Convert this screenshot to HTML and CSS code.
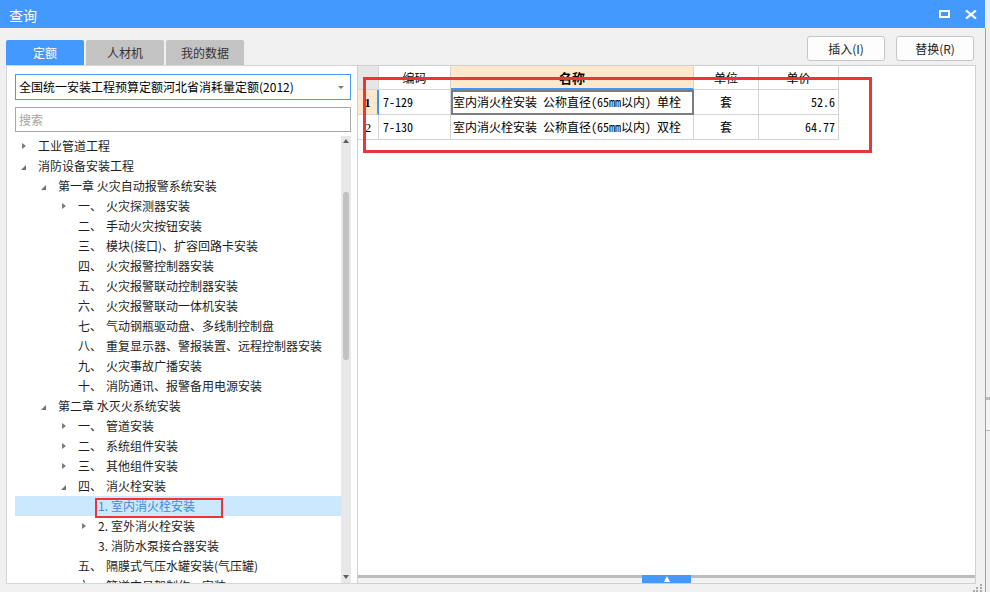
FILE: index.html
```html
<!DOCTYPE html>
<html lang="zh-CN">
<head>
<meta charset="utf-8">
<title>查询</title>
<link rel="stylesheet" href="styles.css">
</head>
<body>
<div class="screen">
  <div class="window">
    <div class="titlebar">
      <span class="title">查询</span>
      <div class="title-btns">
        <svg class="ic" width="11" height="8" viewBox="0 0 11 8"><rect x="1" y="1" width="9" height="6" fill="none" stroke="#fff" stroke-width="2"/></svg>
        <svg class="ic" width="12" height="9" viewBox="0 0 12 9"><path d="M1 0.5 L11 8.5 M11 0.5 L1 8.5" stroke="#fff" stroke-width="2.2" fill="none"/></svg>
      </div>
    </div>
    <div class="body">
      <div class="toolbar">
        <div class="tabs">
          <div class="tab active">定额</div>
          <div class="tab">人材机</div>
          <div class="tab">我的数据</div>
        </div>
        <div class="actions">
          <button class="btn">插入(I)</button>
          <button class="btn">替换(R)</button>
        </div>
      </div>
      <div class="main">
        <div class="left">
          <div class="select"><span>全国统一安装工程预算定额河北省消耗量定额(2012)</span><i class="caret"></i></div>
          <div class="search">搜索</div>
          <div class="tree">
            <div class="tree-list">
              <div class="row"><span class="tw"><i class="tri-r"></i></span>工业管道工程</div>
              <div class="row"><span class="tw"><i class="tri-d"></i></span>消防设备安装工程</div>
              <div class="row l1"><span class="tw"><i class="tri-d"></i></span>第一章 火灾自动报警系统安装</div>
              <div class="row l2"><span class="tw"><i class="tri-r"></i></span><span class="num">一、</span>火灾探测器安装</div>
              <div class="row l2"><span class="tw"></span><span class="num">二、</span>手动火灾按钮安装</div>
              <div class="row l2"><span class="tw"></span><span class="num">三、</span>模块(接口)、扩容回路卡安装</div>
              <div class="row l2"><span class="tw"></span><span class="num">四、</span>火灾报警控制器安装</div>
              <div class="row l2"><span class="tw"></span><span class="num">五、</span>火灾报警联动控制器安装</div>
              <div class="row l2"><span class="tw"></span><span class="num">六、</span>火灾报警联动一体机安装</div>
              <div class="row l2"><span class="tw"></span><span class="num">七、</span>气动钢瓶驱动盘、多线制控制盘</div>
              <div class="row l2"><span class="tw"></span><span class="num">八、</span>重复显示器、警报装置、远程控制器安装</div>
              <div class="row l2"><span class="tw"></span><span class="num">九、</span>火灾事故广播安装</div>
              <div class="row l2"><span class="tw"></span><span class="num">十、</span>消防通讯、报警备用电源安装</div>
              <div class="row l1"><span class="tw"><i class="tri-d"></i></span>第二章 水灭火系统安装</div>
              <div class="row l2"><span class="tw"><i class="tri-r"></i></span><span class="num">一、</span>管道安装</div>
              <div class="row l2"><span class="tw"><i class="tri-r"></i></span><span class="num">二、</span>系统组件安装</div>
              <div class="row l2"><span class="tw"><i class="tri-r"></i></span><span class="num">三、</span>其他组件安装</div>
              <div class="row l2"><span class="tw"><i class="tri-d"></i></span><span class="num">四、</span>消火栓安装</div>
              <div class="row l3 sel"><span class="tw"></span><span class="n3">1.</span>室内消火栓安装<span class="mark"></span></div>
              <div class="row l3"><span class="tw"><i class="tri-r"></i></span><span class="n3">2.</span>室外消火栓安装</div>
              <div class="row l3"><span class="tw"></span><span class="n3">3.</span>消防水泵接合器安装</div>
              <div class="row l2"><span class="tw"></span><span class="num">五、</span>隔膜式气压水罐安装(气压罐)</div>
              <div class="row l2"><span class="tw"></span><span class="num">六、</span>管道支吊架制作、安装</div>
            </div>
            <div class="vscroll">
              <i class="up"></i>
              <div class="thumb"></div>
              <i class="down"></i>
            </div>
          </div>
        </div>
        <div class="right">
          <div class="grid-area">
            <div class="grid">
              <div class="c corner"></div>
              <div class="c h">编码</div>
              <div class="c h cur">名称</div>
              <div class="c h">单位</div>
              <div class="c h">单价</div>

              <div class="c rn cur">1</div>
              <div class="c code">7-129</div>
              <div class="c name cur">室内消火栓安装 公称直径(65mm以内) 单栓</div>
              <div class="c unit">套</div>
              <div class="c price">52.6</div>

              <div class="c rn">2</div>
              <div class="c code">7-130</div>
              <div class="c name">室内消火栓安装 公称直径(65mm以内) 双栓</div>
              <div class="c unit">套</div>
              <div class="c price">64.77</div>
            </div>
            <div class="annot"></div>
          </div>
          <div class="hsplit"><div class="handle"><i></i></div></div>
        </div>
      </div>
      <div class="status">
        <svg width="10" height="8" viewBox="0 0 10 8"><g fill="#a9a9a9"><rect x="7" y="0" width="2" height="2"/><rect x="3" y="3" width="2" height="2"/><rect x="7" y="3" width="2" height="2"/><rect x="0" y="6" width="2" height="2"/><rect x="3" y="6" width="2" height="2"/><rect x="7" y="6" width="2" height="2"/></g></svg>
      </div>
    </div>
  </div>
  <div class="outside">
    <div class="o-gap"></div>
    <div class="o-bar"></div>
    <div class="o-field"></div>
  </div>
</div>
</body>
</html>
```

FILE: styles.css
```css
* { box-sizing: border-box; }
html, body { margin: 0; padding: 0; }
body {
  width: 990px;
  height: 592px;
  overflow: hidden;
  background: #f0f0f0;
  font-family: "Noto Sans CJK SC", "Noto Sans", sans-serif;
  font-size: 12px;
  color: #1e1e1e;
}
.screen { display: flex; width: 990px; height: 592px; }
.window { width: 986px; height: 592px; display: flex; flex-direction: column; }

.titlebar {
  height: 28px;
  flex: none;
  margin-right: 1px;
  background: #4499ff;
  color: #fff;
  display: flex;
  align-items: center;
  justify-content: space-between;
  padding: 0 8px 0 9px;
}
.title { font-size: 14px; line-height: 28px; padding-top: 1px; }
.title-btns { display: flex; align-items: center; gap: 15px; }
.ic { display: block; }

.body { flex: 1; display: flex; flex-direction: column; border-right: 1px solid #a3a3a3; }

.toolbar { height: 37px; flex: none; display: flex; justify-content: space-between; padding: 0 11px 0 6px; }
.tabs { display: flex; align-items: flex-end; gap: 2px; }
.tab {
  width: 78px;
  height: 25px;
  background: #c3c3c3;
  color: #333;
  border-radius: 2px 2px 0 0;
  display: flex;
  align-items: center;
  justify-content: center;
  font-size: 12px;
  line-height: 1;
}
.tab.active { background: #4499ff; color: #fff; }
.actions { display: flex; gap: 11px; padding-top: 8px; }
.btn {
  width: 78px;
  height: 25px;
  background: #fdfdfd;
  border: 1px solid #c6c6c6;
  border-radius: 3px;
  font-family: inherit;
  font-size: 12px;
  color: #222;
  padding: 0;
  line-height: 1;
}

.main { height: 519px; flex: none; display: flex; padding-left: 6px; }

.left {
  width: 351px;
  flex: none;
  border: 1px solid #d6d6d6;
  border-right: none;
  background: #fff;
  display: flex;
  flex-direction: column;
  padding: 8px 6px 0 8px;
}
.select {
  height: 26px;
  flex: none;
  border: 1px solid #4499ff;
  display: flex;
  align-items: center;
  justify-content: space-between;
  padding: 0 6px 0 3px;
  color: #000;
  line-height: 1;
}
.caret {
  width: 0; height: 0;
  border-left: 3px solid transparent;
  border-right: 3px solid transparent;
  border-top: 3px solid #7a7a7a;
}
.search {
  height: 25px;
  flex: none;
  margin-top: 7px;
  border: 1px solid #a8a8a8;
  display: flex;
  align-items: center;
  padding-left: 3px;
  color: #a3a3a3;
  line-height: 1;
}

.tree { flex: 1; margin-top: 4px; display: flex; min-height: 0; }
.tree-list { flex: 1; overflow: hidden; }
.row {
  height: 20px;
  display: flex;
  align-items: center;
  white-space: nowrap;
  position: relative;
  line-height: 20px;
}
.row.l1 { padding-left: 20px; }
.row.l2 { padding-left: 40px; }
.row.l3 { padding-left: 60px; }
.row.sel { background: #cce8ff; color: #3a8be0; }
.tw { width: 23px; height: 20px; flex: none; display: flex; align-items: center; padding-left: 7px; }
.tri-r {
  width: 0; height: 0;
  border-top: 3.5px solid transparent;
  border-bottom: 3.5px solid transparent;
  border-left: 4px solid #7b7b7b;
}
.tri-d {
  width: 0; height: 0;
  margin-left: -1px;
  margin-top: 2px;
  border-style: solid;
  border-width: 0 0 5px 5px;
  border-color: transparent transparent #707070 transparent;
}
.num { width: 28px; flex: none; }
.n3 { width: 13px; flex: none; }
.mark {
  position: absolute;
  left: 80px;
  top: 2px;
  width: 128px;
  height: 20px;
  border: 2px solid #ee3535;
}

.vscroll { width: 10px; flex: none; background: #e8e8e8; display: flex; flex-direction: column; align-items: center; }
.up {
  width: 0; height: 0;
  margin-top: 3px;
  border-left: 3px solid transparent;
  border-right: 3px solid transparent;
  border-bottom: 4px solid #5f5f5f;
}
.thumb { width: 6px; height: 168px; background: #c2c2c2; border-radius: 3px; margin-top: 49px; }
.down {
  width: 0; height: 0;
  margin-top: auto;
  margin-bottom: 4px;
  border-left: 3px solid transparent;
  border-right: 3px solid transparent;
  border-top: 4px solid #5f5f5f;
}

.right { width: 619px; flex: none; border: 1px solid #d0d0d0; display: flex; flex-direction: column; }
.grid-area { flex: 1; background: #fff; position: relative; }
.grid {
  display: grid;
  grid-template-columns: 21px 72px 243px 65px 80px;
  grid-template-rows: 24px 25px 25px;
  width: 481px;
  font-family: "Noto Sans Mono CJK SC", "Noto Sans CJK SC", monospace;
  font-size: 12px;
  color: #000;
}
.c {
  border-right: 1px solid #d4d4d4;
  border-bottom: 1px solid #d4d4d4;
  display: flex;
  align-items: center;
  white-space: nowrap;
  overflow: hidden;
  line-height: 1;
}
.h { justify-content: center; font-family: "Noto Sans CJK SC", sans-serif; }
.corner { background: #e6e6e6; }
.h.cur { background: #ffe8cc; font-weight: bold; font-size: 13px; border-bottom: 2px solid #3b94f7; }
.rn { justify-content: center; font-family: "Liberation Serif", serif; font-size: 13px; }
.rn.cur { background: #ffe8cc; font-weight: bold; border-right: 2px solid #3b94f7; }
.code { padding-left: 4px; }
.name { padding-left: 2px; }
.name.cur { outline: 2px solid #7c7c7c; outline-offset: -2px; }
.unit { justify-content: center; font-family: "Noto Sans CJK SC", sans-serif; }
.price { justify-content: flex-end; padding-right: 3px; }
.annot {
  position: absolute;
  left: 5px;
  top: 11px;
  width: 509px;
  height: 76px;
  border: 3px solid #ee3535;
}
.hsplit { height: 8px; flex: none; border-top: 3px solid #bcbcbc; background: #f3f3f3; display: flex; justify-content: center; }
.handle {
  width: 49px;
  height: 8px;
  margin-top: -3px;
  background: #4499ff;
  display: flex;
  justify-content: center;
  align-items: center;
}
.handle i {
  width: 0; height: 0;
  border-left: 3px solid transparent;
  border-right: 3px solid transparent;
  border-bottom: 6px solid #fff;
}

.status { height: 8px; flex: none; display: flex; justify-content: flex-end; padding-right: 2px; }
.status svg { display: block; }

.outside { flex: 1; display: flex; flex-direction: column; }
.o-gap { height: 397px; }
.o-bar { height: 3px; background: #bcbcbc; }
.o-field { height: 31px; background: #f5f5f5; border-bottom: 1px solid #b8b8b8; }
```
